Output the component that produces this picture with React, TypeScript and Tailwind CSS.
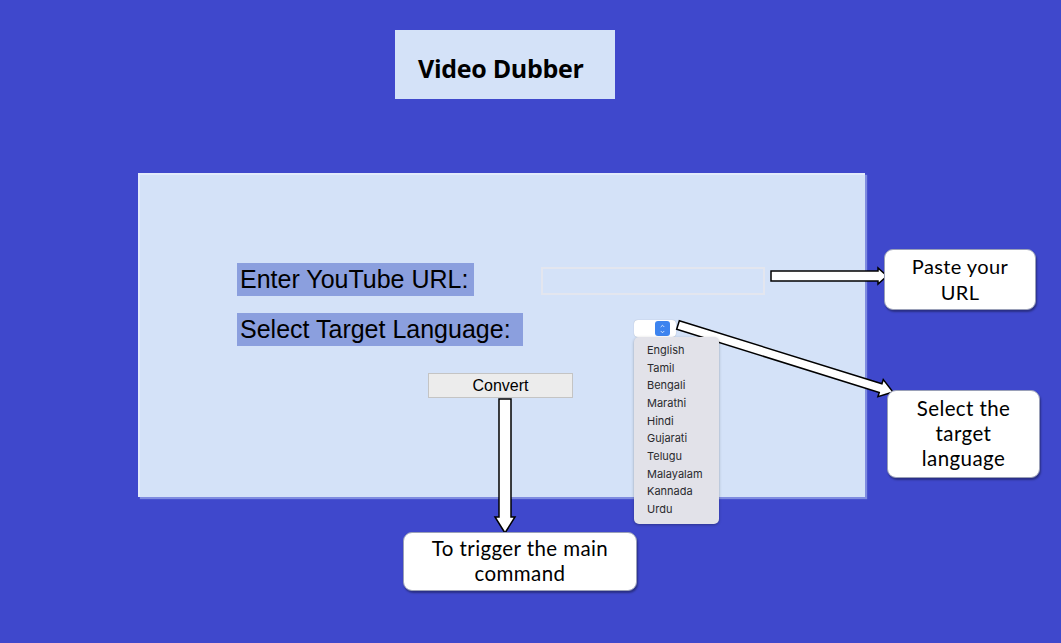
import { ChevronUp, ChevronDown } from 'lucide-react'

const languages = ['English', 'Tamil', 'Bengali', 'Marathi', 'Hindi', 'Gujarati', 'Telugu', 'Malayalam', 'Kannada', 'Urdu']

// arrow drawn along +x from (x1,y1) to (x2,y2)
function Arrow({ x1, y1, x2, y2, shaft, head, headLen }: { x1: number; y1: number; x2: number; y2: number; shaft: number; head: number; headLen: number }) {
  const len = Math.hypot(x2 - x1, y2 - y1)
  const angle = (Math.atan2(y2 - y1, x2 - x1) * 180) / Math.PI
  const s = shaft / 2
  const h = head / 2
  const b = len - headLen
  const points = `0,${-s} ${b},${-s} ${b},${-h} ${len},0 ${b},${h} ${b},${s} 0,${s}`
  return (
    <g transform={`translate(${x1} ${y1}) rotate(${angle})`}>
      <polygon points={points} fill="white" stroke="black" strokeWidth="1.5" strokeLinejoin="miter" />
    </g>
  )
}

function Callout({ className, children }: { className: string; children: React.ReactNode }) {
  return (
    <div
      className={`absolute bg-white rounded-[9px] border border-[#9aa0b8] shadow-[1px_2px_2px_rgba(0,0,0,0.35)] flex items-center justify-center text-center text-black font-['Lato',sans-serif] ${className}`}
    >
      {children}
    </div>
  )
}

export default function App() {
  return (
    <div className="relative w-[1061px] h-[643px] overflow-hidden bg-[#3f48cc] pt-[30px]">
      {/* Title */}
      <div className="ml-[395px] w-[220px] h-[69px] bg-[#d4e2f8] flex items-center pl-[23px] pt-[8px]">
        <span className="font-['Open_Sans',sans-serif] font-bold text-[25px] text-black tracking-[-0.3px]">Video Dubber</span>
      </div>

      {/* Form panel */}
      <div className="ml-[138px] mt-[74px] w-[727px] h-[324px] bg-[#d4e2f8] border-l-2 border-t-2 border-[#e2ebfb] shadow-[2px_2px_1px_#7f8ce0] pt-[88px] pl-[97px] font-['Liberation_Sans',Arial,sans-serif]">
        <div className="flex items-center">
          <div className="h-[33px] w-[237px] bg-[#8b9fde] pl-[3px] flex items-center text-[25px] text-black leading-none">
            Enter YouTube URL:
          </div>
          <div className="ml-[67px] mt-[2px] w-[224px] h-[28px] border-2 border-[#e3e6ef]" />
        </div>
        <div className="flex items-start mt-[17px]">
          <div className="h-[33px] w-[286px] bg-[#8b9fde] pl-[3px] flex items-center text-[25px] text-black leading-none">
            Select Target Language:
          </div>
          <div className="relative ml-[111px] mt-[7px] w-[42px] h-[17px] bg-white rounded-[4px] shadow-[0_0_1px_rgba(0,0,0,0.3)]">
            <div className="absolute right-[6px] top-[1px] w-[15px] h-[15px] rounded-[3px] bg-[#3d84ef] flex flex-col items-center justify-center">
              <ChevronUp className="w-[9px] h-[6px] text-white" strokeWidth={3} />
              <ChevronDown className="w-[9px] h-[6px] text-white" strokeWidth={3} />
            </div>
            {/* open dropdown */}
            <div className="absolute left-0 top-[17px] w-[85px] h-[187px] bg-[#e2e2e9] rounded-[5px] shadow-[0_1px_3px_rgba(0,0,0,0.3)] pt-[5px] pl-[13px] z-10 font-['Inter',sans-serif]">
              {languages.map((l) => (
                <div key={l} className="text-[11px] leading-[17.67px] text-[#2a2a2e]">
                  {l}
                </div>
              ))}
            </div>
          </div>
        </div>
        <div className="mt-[27px] ml-[191px] w-[145px] h-[25px] bg-[#ececec] border border-[#c4c4c4] flex items-center justify-center text-[16px] text-black">
          Convert
        </div>
      </div>

      {/* Annotation arrows */}
      <svg className="absolute left-0 top-0 pointer-events-none" width="1061" height="643">
        <Arrow x1={771} y1={276} x2={887} y2={276} shaft={10} head={16} headLen={9} />
        <Arrow x1={678} y1={325} x2={893} y2={392} shaft={9} head={18} headLen={13} />
        <Arrow x1={505} y1={399} x2={505} y2={533} shaft={12} head={20} headLen={16} />
      </svg>

      {/* Callouts */}
      <Callout className="left-[884px] top-[249px] w-[152px] h-[61px] text-[20px] leading-[26px] tracking-[0.4px] pb-[2px]">
        <span>Paste your<br />URL</span>
      </Callout>
      <Callout className="left-[887px] top-[390px] w-[153px] h-[88px] text-[20.5px] leading-[25px] tracking-[0.4px] pb-[2px]">
        <span>Select the<br />target<br />language</span>
      </Callout>
      <Callout className="left-[403px] top-[532px] w-[234px] h-[59px] text-[20.5px] leading-[25px] tracking-[0.4px] pb-[2px]">
        <span>To trigger the main<br />command</span>
      </Callout>
    </div>
  )
}
